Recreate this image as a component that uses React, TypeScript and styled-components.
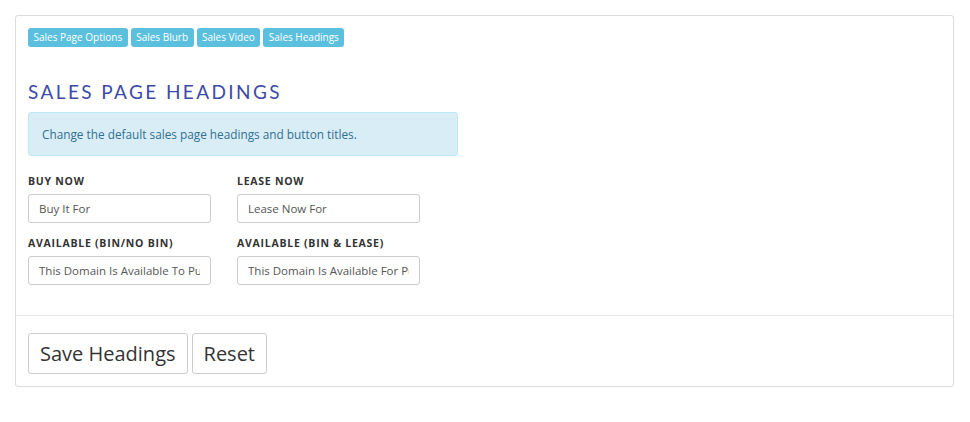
import React from "react";
import styled, { createGlobalStyle } from "styled-components";

const Global = createGlobalStyle`
  html, body { margin: 0; padding: 0; background: #fff; }
  body { font-family: "Open Sans", "Liberation Sans", sans-serif; color: #333; }
`;

const Page = styled.div`
  padding: 15px 16px 15px 15px;
`;

const Card = styled.div`
  border: 1px solid #dcdcdc;
  border-radius: 3px;
  background: #fff;
`;

const Body = styled.div`
  padding: 12px 12px 30px 12px;
  border-bottom: 1px solid #e6e6e6;
`;

const TabRow = styled.div`
  display: flex;
  gap: 3px;
`;

const Tab = styled.button`
  height: 19px;
  padding: 0 5.5px;
  border: none;
  border-radius: 3px;
  background: #5bc0de;
  color: #fff;
  font-family: "Open Sans", "Liberation Sans", sans-serif;
  font-size: 10px;
  line-height: 19px;
  cursor: pointer;
`;

const Heading = styled.h2`
  margin: 34px 0 9px 0;
  font-family: "Lato", "Liberation Sans", sans-serif;
  font-weight: 400;
  font-size: 19px;
  line-height: 22px;
  letter-spacing: 2.4px;
  color: #3c4ba5;
`;

const Alert = styled.div`
  width: 430px;
  box-sizing: border-box;
  height: 44px;
  padding: 0 13px;
  display: flex;
  align-items: center;
  background: #d9edf7;
  border: 1px solid #bce8f1;
  border-radius: 3px;
  color: #31708f;
  font-size: 11.8px;
`;

const Grid = styled.div`
  display: grid;
  grid-template-columns: 183px 183px;
  column-gap: 26px;
  row-gap: 14px;
  margin-top: 19px;
`;

const Field = styled.div`
  display: flex;
  flex-direction: column;
  gap: 5px;
`;

const Label = styled.label`
  font-size: 10.5px;
  font-weight: 700;
  letter-spacing: 0.75px;
  color: #333;
  line-height: 14px;
  margin-top: -1px;
  padding-bottom: 1px;
`;

const Input = styled.input`
  box-sizing: border-box;
  height: 29px;
  width: 183px;
  padding: 0 10px;
  border: 1px solid #ccc;
  border-radius: 3px;
  font-family: "Open Sans", "Liberation Sans", sans-serif;
  font-size: 11.5px;
  color: #555;
  outline: none;
`;

const Footer = styled.div`
  display: flex;
  gap: 4px;
  padding: 17px 12px 12px 12px;
`;

const Button = styled.button`
  height: 41px;
  padding: 0 11px;
  border: 1px solid #ccc;
  border-radius: 3px;
  background: #fff;
  color: #333;
  font-family: "Open Sans", "Liberation Sans", sans-serif;
  font-size: 20px;
  cursor: pointer;
`;

export default function App() {
  return (
    <>
      <Global />
      <Page>
        <Card>
          <Body>
            <TabRow>
              <Tab>Sales Page Options</Tab>
              <Tab>Sales Blurb</Tab>
              <Tab>Sales Video</Tab>
              <Tab>Sales Headings</Tab>
            </TabRow>
            <Heading>SALES PAGE HEADINGS</Heading>
            <Alert>Change the default sales page headings and button titles.</Alert>
            <Grid>
              <Field>
                <Label>BUY NOW</Label>
                <Input defaultValue="Buy It For" />
              </Field>
              <Field>
                <Label>LEASE NOW</Label>
                <Input defaultValue="Lease Now For" />
              </Field>
              <Field>
                <Label>AVAILABLE (BIN/NO BIN)</Label>
                <Input defaultValue="This Domain Is Available To Purchase" />
              </Field>
              <Field>
                <Label>AVAILABLE (BIN &amp; LEASE)</Label>
                <Input defaultValue="This Domain Is Available For Purchase Or Lease" />
              </Field>
            </Grid>
          </Body>
          <Footer>
            <Button>Save Headings</Button>
            <Button>Reset</Button>
          </Footer>
        </Card>
      </Page>
    </>
  );
}
